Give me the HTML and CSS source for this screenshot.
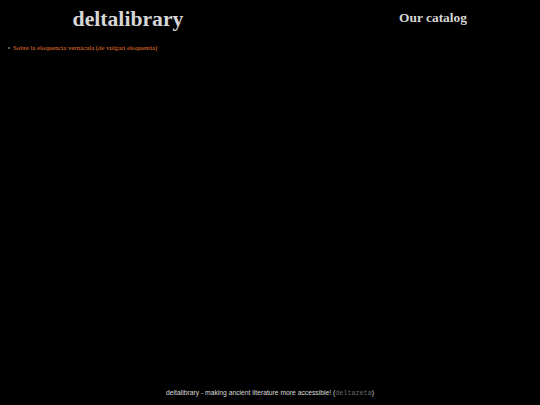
FILE: index.html
```html
<!DOCTYPE html>
<html>
<head>
<meta charset="utf-8">
<link rel="stylesheet" href="styles.css">
</head>
<body>
<div class="page">
  <header class="top">
    <div class="brand">deltalibrary</div>
    <div class="catalog">Our catalog</div>
  </header>
  <ul class="books">
    <li class="item"><a class="book" href="#">Sobre la eloquencia vernácula (de vulgari eloquentia)</a></li>
  </ul>
  <footer class="foot">deltalibrary - making ancient literature more accessible! (<span class="author">deltazeta</span>)</footer>
</div>
</body>
</html>
```
FILE: styles.css
```css
html, body {
  margin: 0;
  padding: 0;
  background: #000;
}
.page {
  width: 540px;
  height: 405px;
  display: flex;
  flex-direction: column;
  font-family: "Liberation Serif", "Times New Roman", serif;
}
.top {
  display: flex;
  justify-content: space-between;
  align-items: flex-start;
}
.brand {
  width: 256px;
  text-align: center;
  font-weight: bold;
  font-size: 21.7px;
  color: #d6d6d6;
  line-height: 26px;
  padding-top: 6px;
}
.catalog {
  width: 214px;
  text-align: center;
  font-weight: bold;
  font-size: 13.4px;
  color: #d6d6d6;
  line-height: 16px;
  padding-top: 10px;
}
.books {
  margin: 12px 0 0 0;
  padding: 0 0 0 8px;
  list-style: none;
  font-size: 6.75px;
  line-height: 8px;
}
.item {
  display: flex;
  align-items: center;
  gap: 3px;
}
.item::before {
  content: "";
  width: 2px;
  height: 2px;
  border-radius: 50%;
  background: #777;
}
.book {
  color: #e8772e;
  text-decoration: none;
}
.foot {
  margin-top: auto;
  margin-bottom: 8px;
  text-align: center;
  font-family: "Liberation Sans", Arial, sans-serif;
  font-size: 6.75px;
  color: #dcdcdc;
}
.author {
  font-family: "Liberation Mono", "Courier New", monospace;
  color: #6a6a6a;
}
```
